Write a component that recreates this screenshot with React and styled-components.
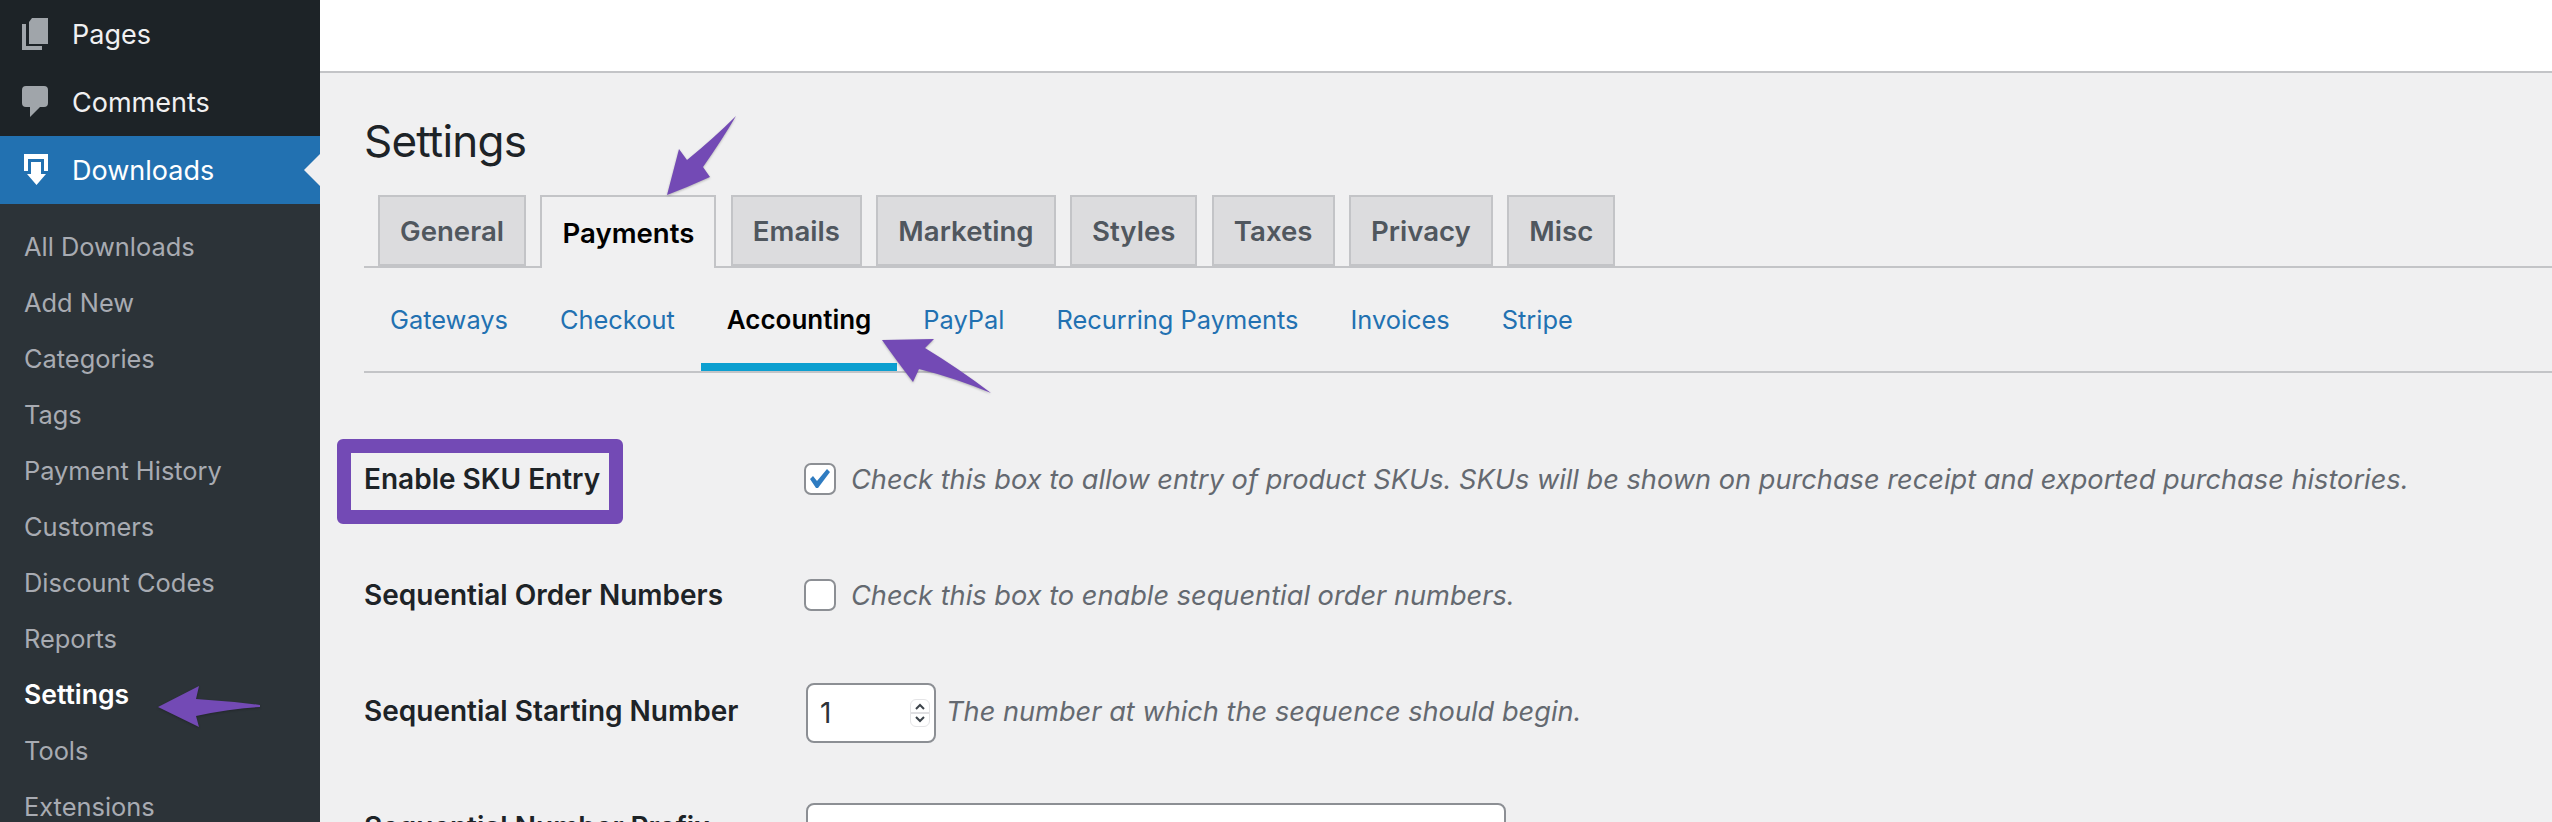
import styled, { createGlobalStyle } from 'styled-components';

const subMenu = [
  'All Downloads',
  'Add New',
  'Categories',
  'Tags',
  'Payment History',
  'Customers',
  'Discount Codes',
  'Reports',
  'Settings',
  'Tools',
  'Extensions',
];

const tabs = ['General', 'Payments', 'Emails', 'Marketing', 'Styles', 'Taxes', 'Privacy', 'Misc'];
const sections = ['Gateways', 'Checkout', 'Accounting', 'PayPal', 'Recurring Payments', 'Invoices', 'Stripe'];

const App = () => {
  return (
    <Page>
      <GlobalStyle />
      <Sidebar>
        <MenuItem>
          <MenuIcon viewBox="0 0 26 32">
            <path d="M10 0H26V26H7V4Z" />
            <path d="M0 6H4V28H20V32H0Z" />
          </MenuIcon>
          Pages
        </MenuItem>
        <MenuItem>
          <MenuIcon viewBox="0 0 26 32">
            <path d="M4 0H22a4 4 0 0 1 4 4V17a4 4 0 0 1-4 4H18L8 31V21H4a4 4 0 0 1-4-4V4a4 4 0 0 1 4-4Z" />
          </MenuIcon>
          Comments
        </MenuItem>
        <MenuItem $current>
          <MenuIcon viewBox="0 0 26 32" $current>
            <path d="M2 0H26V17H22V5H6V17H2Z" />
            <path d="M9 8H19V20H24L14.5 31L5 20H9Z" />
          </MenuIcon>
          Downloads
          <CurrentPointer />
        </MenuItem>
        <SubMenu>
          {subMenu.map((item) => (
            <SubItem key={item} $active={item === 'Settings'}>
              {item}
            </SubItem>
          ))}
        </SubMenu>
      </Sidebar>
      <Main>
        <TopBar />
        <Content>
          <Title>Settings</Title>
          <Tabs>
            {tabs.map((tab) => (
              <Tab key={tab} $active={tab === 'Payments'}>
                {tab}
              </Tab>
            ))}
          </Tabs>
          <SectionNav>
            {sections.map((section) => (
              <SectionLink key={section} $active={section === 'Accounting'}>
                {section}
              </SectionLink>
            ))}
          </SectionNav>
          <FormRow>
            <Label>Enable SKU Entry</Label>
            <Field>
              <Checkbox>
                <svg width="22" height="20" viewBox="0 0 22 20">
                  <path d="M1 10L4 7L8 12L18 0L21 3L9 19H7Z" fill="#2f7cc1" />
                </svg>
              </Checkbox>
              <Description>
                Check this box to allow entry of product SKUs. SKUs will be shown on purchase receipt and exported
                purchase histories.
              </Description>
            </Field>
          </FormRow>
          <FormRow>
            <Label>Sequential Order Numbers</Label>
            <Field>
              <Checkbox />
              <Description>Check this box to enable sequential order numbers.</Description>
            </Field>
          </FormRow>
          <FormRow>
            <Label>Sequential Starting Number</Label>
            <Field>
              <NumberField>
                <NumberInput defaultValue="1" readOnly />
                <Spinner>
                  <svg width="18" height="26" viewBox="0 0 18 26">
                    <path d="M5 9L9 5L13 9M5 17L9 21L13 17" fill="none" stroke="#3c434a" strokeWidth="2" />
                    <path d="M0 13H18" stroke="#d5d5d8" strokeWidth="1.5" />
                  </svg>
                </Spinner>
              </NumberField>
              <Description>The number at which the sequence should begin.</Description>
            </Field>
          </FormRow>
          <FormRow>
            <Label>Sequential Number Prefix</Label>
            <Field>
              <TextInput readOnly />
            </Field>
          </FormRow>
        </Content>
      </Main>
      <Highlight />
      <Arrows viewBox="0 0 2552 822">
        <path d="M667 195L679 149L687 160Q714 138 736 116Q722 140 703 167L710 177Q688 187 667 195Z" />
        <path d="M882 340L934 339L925 348Q958 368 991 393Q955 378 919 369L913 382Q896 360 882 340Z" />
        <path d="M158 707L199 686L196 699Q228 701 260 705V707Q228 709 196 716L199 727Z" />
      </Arrows>
    </Page>
  );
};

const GlobalStyle = createGlobalStyle`
  html,
  body {
    margin: 0;
    padding: 0;
    background: #f0f0f1;
  }
`;

const Page = styled.div`
  position: relative;
  display: flex;
  width: 2552px;
  height: 822px;
  overflow: hidden;
  background: #f0f0f1;
  font-family: Inter, 'Liberation Sans', sans-serif;
`;

const Sidebar = styled.nav`
  display: flex;
  flex-direction: column;
  flex: 0 0 320px;
  background: #1d2327;
`;

const MenuItem = styled.div`
  position: relative;
  display: flex;
  align-items: center;
  flex: 0 0 68px;
  padding-left: 22px;
  font-size: 27px;
  font-weight: 400;
  color: ${(p) => (p.$current ? '#fff' : '#f0f0f1')};
  background: ${(p) => (p.$current ? '#2271b1' : 'transparent')};
`;

const MenuIcon = styled.svg`
  width: 26px;
  height: 32px;
  margin-right: 24px;
  fill: ${(p) => (p.$current ? '#fff' : '#a0a5aa')};
`;

const CurrentPointer = styled.span`
  position: absolute;
  top: 18px;
  right: 0;
  border-top: 16px solid transparent;
  border-bottom: 16px solid transparent;
  border-right: 16px solid #f0f0f1;
`;

const SubMenu = styled.div`
  display: flex;
  flex-direction: column;
  flex: 1;
  padding-top: 14px;
  background: #2c3338;
`;

const SubItem = styled.div`
  display: flex;
  align-items: center;
  flex: 0 0 56px;
  padding-left: 24px;
  font-size: ${(p) => (p.$active ? '26.5px' : '25.4px')};
  font-weight: ${(p) => (p.$active ? 600 : 400)};
  color: ${(p) => (p.$active ? '#fff' : '#a8abb2')};
`;

const Main = styled.main`
  display: flex;
  flex-direction: column;
  flex: 1;
  min-width: 0;
`;

const TopBar = styled.div`
  flex: 0 0 73px;
  box-sizing: border-box;
  background: #fff;
  border-bottom: 2px solid #c3c4c7;
`;

const Content = styled.div`
  display: flex;
  flex-direction: column;
  padding: 38px 0 0 44px;
`;

const Title = styled.h1`
  margin: 0 0 24px;
  font-size: 44px;
  font-weight: 400;
  line-height: 60px;
  letter-spacing: -0.8px;
  color: #1d2327;
`;

const Tabs = styled.div`
  display: flex;
  gap: 14.5px;
  height: 73px;
  box-sizing: border-box;
  padding-left: 14px;
  border-bottom: 2px solid #c3c4c7;
`;

const Tab = styled.div`
  display: flex;
  align-items: center;
  height: ${(p) => (p.$active ? '73px' : '71px')};
  box-sizing: border-box;
  padding: 0 20px;
  border: 2px solid #c3c4c7;
  border-bottom: ${(p) => (p.$active ? '0' : '2px solid #c3c4c7')};
  font-size: 27.6px;
  font-weight: 600;
  color: ${(p) => (p.$active ? '#000' : '#50575e')};
  background: ${(p) => (p.$active ? '#f0f0f1' : '#dcdcde')};
`;

const SectionNav = styled.div`
  display: flex;
  margin-bottom: 48px;
  border-bottom: 2px solid #c3c4c7;
`;

const SectionLink = styled.div`
  padding: 32px 26px 23px;
  border-bottom: 8px solid ${(p) => (p.$active ? '#0c9fd0' : 'transparent')};
  font-size: ${(p) => (p.$active ? '26px' : '25.4px')};
  font-weight: ${(p) => (p.$active ? 600 : 400)};
  line-height: 40px;
  color: ${(p) => (p.$active ? '#000' : '#2271b1')};
`;

const FormRow = styled.div`
  display: flex;
  align-items: center;
  flex: 0 0 116px;
`;

const Label = styled.div`
  flex: 0 0 440px;
  font-size: 28px;
  font-weight: 600;
  color: #1d2327;
`;

const Field = styled.div`
  display: flex;
  align-items: center;
`;

const Checkbox = styled.span`
  display: flex;
  align-items: center;
  justify-content: center;
  width: 32px;
  height: 32px;
  box-sizing: border-box;
  margin-right: 15px;
  border: 2px solid #8c8f94;
  border-radius: 7px;
  background: #fff;
`;

const Description = styled.span`
  font-size: 27.2px;
  font-style: italic;
  color: #646970;
  white-space: nowrap;
`;

const NumberField = styled.div`
  display: flex;
  align-items: center;
  width: 130px;
  height: 60px;
  box-sizing: border-box;
  margin: 4px 10px 0 2px;
  padding: 0 4px 0 12px;
  border: 2px solid #8c8f94;
  border-radius: 8px;
  background: #fff;
`;

const NumberInput = styled.input`
  width: 80px;
  flex: 1;
  min-width: 0;
  padding: 0;
  border: 0;
  outline: 0;
  font-family: inherit;
  font-size: 28px;
  color: #2c3338;
  background: transparent;
`;

const Spinner = styled.span`
  display: flex;
  border: 1px solid #e4e4e6;
  border-radius: 6px;
`;

const TextInput = styled.input`
  width: 700px;
  height: 60px;
  box-sizing: border-box;
  margin: 12px 0 0 2px;
  border: 2px solid #8c8f94;
  border-radius: 8px;
  outline: 0;
  background: #fff;
`;

/* annotations drawn over the screenshot */
const Highlight = styled.div`
  position: absolute;
  left: 337px;
  top: 439px;
  width: 286px;
  height: 85px;
  box-sizing: border-box;
  border: 14px solid #734ab5;
  border-radius: 6px;
`;

const Arrows = styled.svg`
  position: absolute;
  left: 0;
  top: 0;
  width: 2552px;
  height: 822px;
  fill: #734ab5;
  filter: drop-shadow(0 1px 1px rgba(0, 0, 0, 0.25));
  pointer-events: none;
`;

export default App;
